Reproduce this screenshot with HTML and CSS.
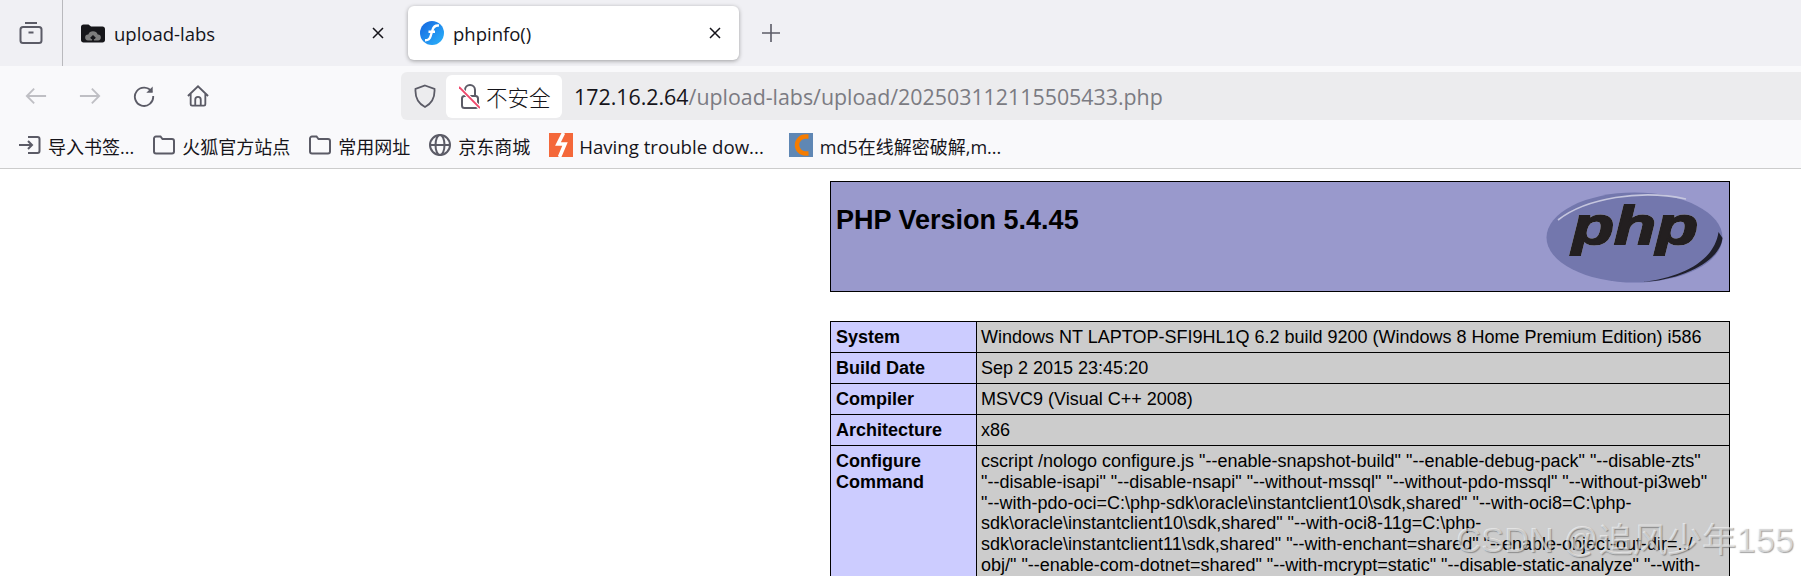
FILE: index.html
```html
<!DOCTYPE html>
<html lang="zh">
<head>
<meta charset="utf-8">
<title>phpinfo()</title>
<link rel="stylesheet" href="styles.css">
</head>
<body>
<header class="chrome">
  <div class="tabbar">
    <div class="sidebtn">
      <svg class="ic24" viewBox="0 0 24 24" fill="none" stroke="#5b5b66" stroke-width="2"><path d="M6 2h12"/><rect x="1.500" y="6" width="21" height="16" rx="2.500"/><path d="M9.500 11.500h5"/></svg>
    </div>
    <div class="tab">
      <svg class="fav" viewBox="0 0 24 24"><path d="M0 6C0 4.500 1 3.500 2.500 3.500h5L10 5.500h11.500C23 5.500 24 6.500 24 8v11c0 1.500-1 2.500-2.500 2.500h-19C1 21.500 0 20.500 0 19z" fill="#16161a"/><path d="M7 19.500a3 3 0 0 1 .3-6 5 5 0 0 1 9.400 0 3 3 0 0 1 .3 6z" fill="#7d7d7d"/><path d="M12 20v-4.500M9.800 17.500l2.200-2.200 2.200 2.200" stroke="#16161a" stroke-width="1.800" fill="none"/></svg>
      <span class="tabtitle">upload-labs</span>
      <svg class="close" viewBox="0 0 12 12" fill="none" stroke="#15141a" stroke-width="1.500"><path d="M1 1l10 10M11 1L1 11"/></svg>
    </div>
    <div class="tab active">
      <svg class="fav" viewBox="0 0 24 24"><defs><linearGradient id="flash" x1="0" y1="0" x2="1" y2="1"><stop offset="0" stop-color="#1565e0"/><stop offset="1" stop-color="#2bb4fb"/></linearGradient></defs><circle cx="12" cy="12" r="12" fill="url(#flash)"/><path d="M19 4.500c-3.800-.5-5.500 1-6.500 4.500l-2 6.500c-.7 2.300-2.500 3.800-5.500 3.700M8.500 10.800h6.500" stroke="#fff" stroke-width="2.400" fill="none"/></svg>
      <span class="tabtitle">phpinfo()</span>
      <svg class="close" viewBox="0 0 12 12" fill="none" stroke="#15141a" stroke-width="1.500"><path d="M1 1l10 10M11 1L1 11"/></svg>
    </div>
    <div class="newtab">
      <svg class="ic18" viewBox="0 0 18 18" fill="none" stroke="#5b5b66" stroke-width="1.600"><path d="M9 0v18M0 9h18"/></svg>
    </div>
  </div>
  <div class="toolbar">
    <div class="navbtns">
      <svg class="nav" viewBox="0 0 24 24" fill="none" stroke="#bfbfc4" stroke-width="2"><path d="M23 12H2M10 4l-8 8 8 8"/></svg>
      <svg class="nav" viewBox="0 0 24 24" fill="none" stroke="#bfbfc4" stroke-width="2"><path d="M1 12h21M14 4l8 8-8 8"/></svg>
      <svg class="nav" viewBox="0 0 24 24" fill="none" stroke="#5b5b66" stroke-width="2"><path d="M20.500 7.500A10 10 0 1 0 22 12"/><path d="M21.500 1.500v7h-7z" fill="#5b5b66" stroke="none"/></svg>
      <svg class="nav" viewBox="0 0 24 24" fill="none" stroke="#5b5b66" stroke-width="2"><path d="M1 12L12 1.500 23 12M4 9.500V21a1.500 1.500 0 0 0 1.500 1.500h13A1.500 1.500 0 0 0 20 21V9.500M9 22v-6a3 3 0 0 1 6 0v6"/></svg>
    </div>
    <div class="urlbar">
      <svg class="shield" viewBox="0 0 24 24" fill="none" stroke="#5b5b66" stroke-width="1.800"><path d="M12 1.500L21.500 5c.5 8-1.500 14-9.500 18C4 19 2 13 2.500 5z"/></svg>
      <div class="secure">
        <svg class="lock" viewBox="0 0 21 26" fill="none"><path d="M6 13V7a5 5 0 0 1 10 0v6" stroke="#5b5b66" stroke-width="2"/><rect x="3" y="13" width="16" height="12" rx="2.500" stroke="#5b5b66" stroke-width="2"/><path d="M0 4l21 21" stroke="#fff" stroke-width="4"/><path d="M0 4l21 21" stroke="#f0476c" stroke-width="1.800"/></svg>
        <span class="securetext">不安全</span>
      </div>
      <div class="url"><span class="host">172.16.2.64</span><span class="path">/upload-labs/upload/202503112115505433.php</span></div>
    </div>
  </div>
  <nav class="bookmarks">
    <div class="bm">
      <svg class="bmi" viewBox="0 0 22 22" fill="none" stroke="#5b5b66" stroke-width="2"><path d="M9 3h9.500A2 2 0 0 1 20.500 5v12a2 2 0 0 1-2 2H9M0 11h13M9 7l4 4-4 4"/></svg>
      <span>导入书签...</span>
    </div>
    <div class="bm">
      <svg class="bmi" viewBox="0 0 22 22" fill="none" stroke="#5b5b66" stroke-width="2"><path d="M1 4.500A2 2 0 0 1 3 2.500h4.500l2 2.500H19a2 2 0 0 1 2 2v10.500a2 2 0 0 1-2 2H3a2 2 0 0 1-2-2z"/></svg>
      <span>火狐官方站点</span>
    </div>
    <div class="bm">
      <svg class="bmi" viewBox="0 0 22 22" fill="none" stroke="#5b5b66" stroke-width="2"><path d="M1 4.500A2 2 0 0 1 3 2.500h4.500l2 2.500H19a2 2 0 0 1 2 2v10.500a2 2 0 0 1-2 2H3a2 2 0 0 1-2-2z"/></svg>
      <span>常用网址</span>
    </div>
    <div class="bm">
      <svg class="bmi" viewBox="0 0 22 22" fill="none" stroke="#5b5b66" stroke-width="2"><circle cx="11" cy="11" r="10"/><ellipse cx="11" cy="11" rx="4.500" ry="10"/><path d="M1 11h20"/></svg>
      <span>京东商城</span>
    </div>
    <div class="bm wide">
      <svg class="bmi big" viewBox="0 0 24 24"><rect width="24" height="24" fill="#f4683a"/><path d="M14.500 0L9 11h7L10.500 24" fill="none" stroke="#fff" stroke-width="3.600"/></svg>
      <span class="latin">Having trouble dow...</span>
    </div>
    <div class="bm">
      <svg class="bmi big" viewBox="0 0 24 24"><rect width="24" height="24" fill="#5f87b4"/><path d="M19.500 3.500h-3a8.500 8.500 0 0 0 0 17h3" fill="none" stroke="#f57c00" stroke-width="4.500"/></svg>
      <span>md5在线解密破解,m...</span>
    </div>
  </nav>
</header>
<main class="page">
  <table class="phpinfo head">
    <tr class="h">
      <td>
        <svg class="phplogo" viewBox="0 0 177 91"><ellipse cx="88.500" cy="45.500" rx="88" ry="45" fill="#7377ad"/><path d="M12 28C40 6 95 -3 140 7" stroke="#c5c6de" stroke-width="1.600" fill="none"/><path d="M176.500 46c-2 22-38 42-80 44 42-5 72-22 76-50z" fill="#1f1f2b"/><text x="26" y="52" class="logotext" textLength="126" lengthAdjust="spacingAndGlyphs">php</text></svg>
        <h1>PHP Version 5.4.45</h1>
      </td>
    </tr>
  </table>
  <table class="phpinfo info">
    <tr><td class="e">System</td><td class="v">Windows NT LAPTOP-SFI9HL1Q 6.2 build 9200 (Windows 8 Home Premium Edition) i586</td></tr>
    <tr><td class="e">Build Date</td><td class="v">Sep 2 2015 23:45:20</td></tr>
    <tr><td class="e">Compiler</td><td class="v">MSVC9 (Visual C++ 2008)</td></tr>
    <tr><td class="e">Architecture</td><td class="v">x86</td></tr>
    <tr class="cmd"><td class="e">Configure Command</td><td class="v">cscript /nologo configure.js "--enable-snapshot-build" "--enable-debug-pack" "--disable-zts"<br>"--disable-isapi" "--disable-nsapi" "--without-mssql" "--without-pdo-mssql" "--without-pi3web"<br>"--with-pdo-oci=C:\php-sdk\oracle\instantclient10\sdk,shared" "--with-oci8=C:\php-<br>sdk\oracle\instantclient10\sdk,shared" "--with-oci8-11g=C:\php-<br>sdk\oracle\instantclient11\sdk,shared" "--with-enchant=shared" "--enable-object-out-dir=../<br>obj/" "--enable-com-dotnet=shared" "--with-mcrypt=static" "--disable-static-analyze" "--with-<br>pgo"</td></tr>
  </table>
</main>
<div class="watermark">CSDN @追风少年155</div>
</body>
</html>
```
FILE: styles.css
```css
* { box-sizing: border-box; }
html, body { margin: 0; padding: 0; height: 576px; overflow: hidden; background: #fff; }
body { font-family: "Liberation Sans", Arial, sans-serif; color: #000; position: relative; }
svg { display: block; flex: none; }

.chrome { font-family: "Open Sans", "Noto Sans CJK SC", sans-serif; }
.tabbar { display: flex; height: 66px; background: #f0f0f4; align-items: center; }
.sidebtn { width: 63px; height: 66px; border-right: 1px solid #b9b9bd; display: flex; align-items: center; justify-content: center; }
.ic24 { width: 24px; height: 24px; }
.tab { height: 54px; display: flex; align-items: center; border-radius: 6px; font-size: 18.500px; color: #15141a; }
.sidebtn + .tab { width: 338px; padding: 0 17px 0 18px; }
.tab.active { background: #fff; box-shadow: 0 1px 4px rgba(0,0,0,.35); width: 331px; margin-left: 7px; padding: 0 18px 0 12px; }
.fav { width: 24px; height: 24px; }
.tabtitle { flex: 1; margin-left: 9px; white-space: nowrap; }
.close { width: 12px; height: 12px; }
.newtab { width: 64px; display: flex; justify-content: center; }
.ic18 { width: 18px; height: 18px; }

.toolbar { display: flex; height: 54px; background: #f9f9fb; padding-top: 6px; }
.navbtns { width: 401px; height: 48px; display: flex; align-items: center; padding-left: 25px; gap: 32px; }
.nav { width: 22px; height: 22px; }
.urlbar { flex: 1; height: 48px; background: #ececee; border-radius: 6px 0 0 6px; display: flex; align-items: center; padding-left: 12px; }
.shield { width: 24px; height: 24px; }
.secure { width: 116px; height: 43px; margin-left: 9px; background: #fff; border-radius: 6px; display: flex; align-items: center; padding-left: 13px; }
.lock { width: 21px; height: 26px; }
.securetext { font-size: 21.500px; margin-left: 6px; color: #15141a; font-family: "Noto Sans CJK SC", sans-serif; font-weight: 300; }
.url { margin-left: 12px; font-size: 21.370px; white-space: nowrap; }
.host { color: #15141a; }
.path { color: #7b7b82; }

.bookmarks { display: flex; height: 49px; background: #f9f9fb; border-bottom: 1px solid #ccc; align-items: center; padding: 4px 0 0 19px; gap: 19px; font-size: 18px; color: #15141a; font-family: "Open Sans", "Noto Sans CJK SC", sans-serif; }
.bm { display: flex; align-items: center; gap: 7px; white-space: nowrap; }
.bm svg { margin-top: -2px; }
.bm.wide { margin-right: 6px; gap: 6px; }
.latin { font-size: 18.650px; }
.bmi { width: 22px; height: 22px; }
.bmi.big { width: 24px; height: 24px; }

.page { padding: 12px 0 0 830px; }
.phpinfo { width: 900px; border-collapse: collapse; font-size: 18px; line-height: 21px; }
.phpinfo td { border: 1px solid #000; padding: 5px 5px 4px; vertical-align: baseline; }
.head { margin-bottom: 29px; }
.h td { background: #9999cc; height: 110px; padding: 9px 6px 0 5px; vertical-align: top; }
.phplogo { float: right; width: 177px; height: 91px; margin-top: 1px; }
.logotext { font-family: "Liberation Sans", sans-serif; font-weight: 700; font-style: italic; font-size: 54px; fill: #231f20; stroke: #231f20; stroke-width: 2px; filter: drop-shadow(0 0 .7px #e4e4f0); }
h1 { margin: 14px 0 0; font-size: 27px; line-height: 31px; font-weight: 700; }
.e { width: 146px; background: #ccccff; font-weight: 700; }
.phpinfo td.v { background: #cccccc; padding-left: 4px; }
.cmd td { line-height: 20.800px; }
.watermark { position: absolute; left: 1456px; top: 520px; font-family: "Liberation Sans", "Noto Sans CJK SC", sans-serif; font-size: 34.500px; line-height: 40px; white-space: nowrap; color: rgba(255,255,255,.55); text-shadow: 1px 1px 1px rgba(90,90,90,.55); }
```
